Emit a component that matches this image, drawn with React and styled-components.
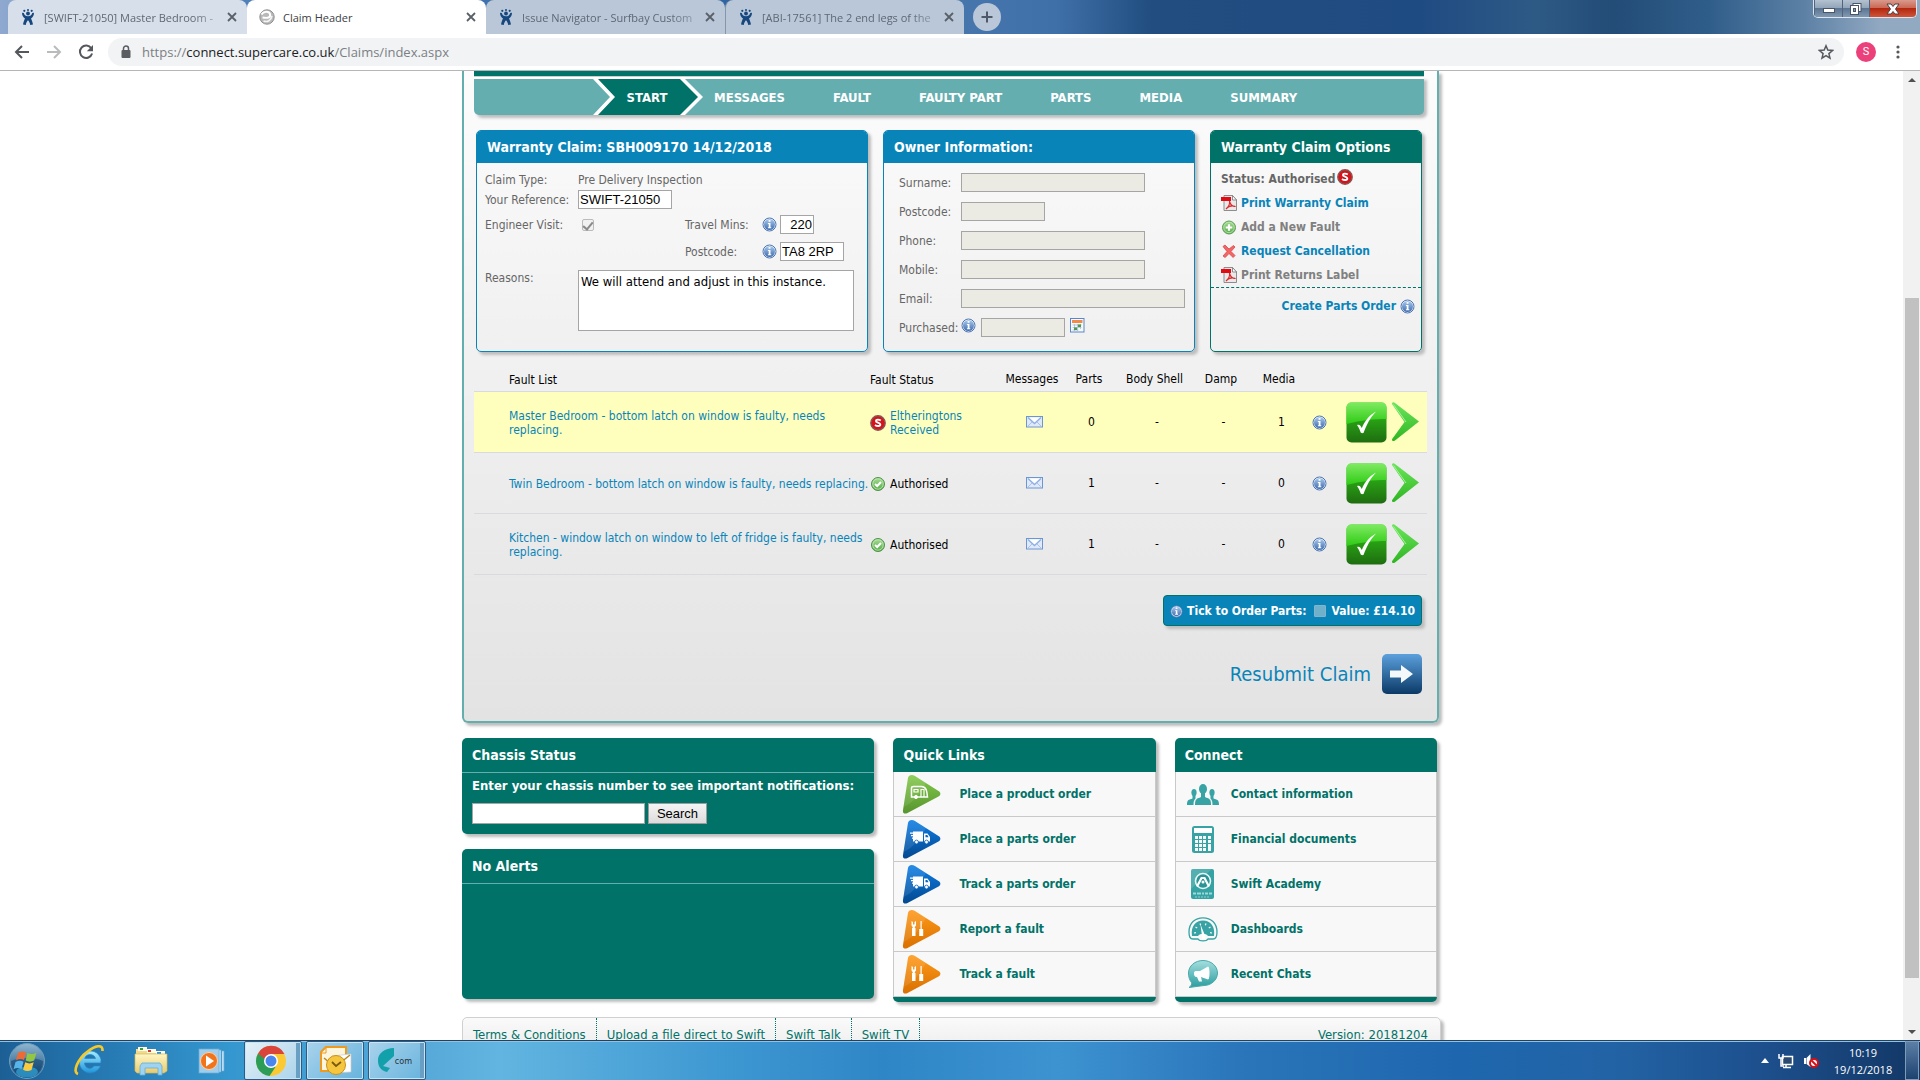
import styled, { createGlobalStyle, css } from "styled-components";

const tahoma = `"DejaVu Sans Condensed", "DejaVu Sans", sans-serif`;
const segoe = `"Open Sans", "Noto Sans", sans-serif`;
const arial = `"Liberation Sans", Arial, sans-serif`;

const tabs = [
    { title: "[SWIFT-21050] Master Bedroom -", tone: "light" },
    { title: "Claim Header", active: true },
    { title: "Issue Navigator - Surfbay Custom", tone: "dark" },
    { title: "[ABI-17561] The 2 end legs of the", tone: "dark", divided: true },
];

const steps = ["MESSAGES", "FAULT", "FAULTY PART", "PARTS", "MEDIA", "SUMMARY"];

const owner = [
    { id: "surname", label: "Surname:", width: 184 },
    { id: "ownerPostcode", label: "Postcode:", width: 84 },
    { id: "phone", label: "Phone:", width: 184 },
    { id: "mobile", label: "Mobile:", width: 184 },
    { id: "email", label: "Email:", width: 224 },
];

const options = [
    { label: "Print Warranty Claim", Icon: PdfIcon },
    { label: "Add a New Fault", Icon: AddIcon, muted: true },
    { label: "Request Cancellation", Icon: CrossIcon },
    { label: "Print Returns Label", Icon: PdfIcon, muted: true },
];

const faults = [
    { text: "Master Bedroom - bottom latch on window is faulty, needs replacing.", status: "Eltheringtons Received", received: true, parts: 0, media: 1 },
    { text: "Twin Bedroom - bottom latch on window is faulty, needs replacing.", status: "Authorised", parts: 1, media: 0 },
    { text: "Kitchen - window latch on window to left of fridge is faulty, needs replacing.", status: "Authorised", parts: 1, media: 0 },
];

const quickLinks = [
    { label: "Place a product order", kind: "caravan" },
    { label: "Place a parts order", kind: "truck" },
    { label: "Track a parts order", kind: "truck" },
    { label: "Report a fault", kind: "tools" },
    { label: "Track a fault", kind: "tools" },
];

const connectLinks = [
    { label: "Contact information", Icon: PeopleIcon },
    { label: "Financial documents", Icon: CalculatorIcon },
    { label: "Swift Academy", Icon: AcademyIcon },
    { label: "Dashboards", Icon: GaugeIcon },
    { label: "Recent Chats", Icon: ChatIcon },
];

const footerLinks = ["Terms & Conditions", "Upload a file direct to Swift", "Swift Talk", "Swift TV"];

function App() {
    return (
        <Screen>
            <GlobalStyle />
            <Gradients />
            <Browser />
            <Viewport>
                <Page>
                    <Site>
                        <ClaimPanel />
                        <BottomRow />
                        <Footer>
                            {footerLinks.map(text => <FooterLink href="#" key={text}>{text}</FooterLink>)}
                            <Version>Version: 20181204</Version>
                        </Footer>
                    </Site>
                </Page>
                <Scrollbar>
                    <svg width="17" height="17"><path d="M5 11h8l-4-4z" fill="#505050" /></svg>
                    <Thumb />
                    <svg width="17" height="17"><path d="M5 7h8l-4 4z" fill="#505050" /></svg>
                </Scrollbar>
            </Viewport>
            <Taskbar />
        </Screen>
    )
}

export default App;

function Browser() {
    return (
        <header>
            <TabStrip>
                {tabs.map(tab => (
                    <Tab key={tab.title} $active={tab.active} $tone={tab.tone} $divided={tab.divided}>
                        {tab.active ? <ClaimFavicon /> : <JiraFavicon />}
                        <TabTitle $active={tab.active}>{tab.title}</TabTitle>
                        <TabClose aria-label="Close tab">
                            <svg width="10" height="10" viewBox="0 0 10 10"><path d="M1 1l8 8M9 1l-8 8" stroke="#5a6068" strokeWidth="1.8" /></svg>
                        </TabClose>
                    </Tab>
                ))}
                <NewTab aria-label="New tab">
                    <svg width="14" height="14" viewBox="0 0 14 14"><path d="M7 1.500v11M1.500 7h11" stroke="#4e5a69" strokeWidth="2" /></svg>
                </NewTab>
                <WindowButtons>
                    <WindowButton aria-label="Minimise" $width={28}>
                        <svg width="14" height="12"><rect x="1.5" y="5.5" width="11" height="4" fill="#fff" stroke="#4b5568" /></svg>
                    </WindowButton>
                    <WindowButton aria-label="Restore" $width={27}>
                        <svg width="14" height="14">
                            <rect x="4" y="1.5" width="8" height="8" fill="#fff" stroke="#4b5568" />
                            <rect x="1.5" y="3.5" width="8" height="9" fill="#fff" stroke="#4b5568" />
                            <rect x="4.5" y="6.5" width="2" height="3" fill="#8a9bb0" stroke="#4b5568" />
                        </svg>
                    </WindowButton>
                    <WindowButton aria-label="Close" $width={47} $red>
                        <svg width="14" height="12" viewBox="0 0 14 12"><path d="M1 1h4l2 2.500L9 1h4L9.500 6l3.500 5H9L7 8.500 5 11H1l3.500-5z" fill="#fff" stroke="#4b4048" /></svg>
                    </WindowButton>
                </WindowButtons>
            </TabStrip>
            <Toolbar>
                <ToolButton aria-label="Back"><ArrowIcon color="#54585d" /></ToolButton>
                <ToolButton aria-label="Forward"><ArrowIcon color="#b9bbbd" flip /></ToolButton>
                <ToolButton aria-label="Reload">
                    <svg width="18" height="18" viewBox="0 0 18 18">
                        <path d="M14.300 5.200A6.200 6.200 0 1 0 15.100 10.500" fill="none" stroke="#54585d" strokeWidth="2" />
                        <path d="M16 2v6.200H9.800z" fill="#54585d" />
                    </svg>
                </ToolButton>
                <Omnibox>
                    <svg width="10" height="14" viewBox="0 0 10 14">
                        <rect x="0.500" y="5" width="9" height="8" rx="1" fill="#5a5e63" />
                        <path d="M2.500 5V3.500a2.500 2.500 0 0 1 5 0V5" fill="none" stroke="#5a5e63" strokeWidth="1.500" />
                    </svg>
                    <Url>https://<b>connect.supercare.co.uk</b>/Claims/index.aspx</Url>
                    <svg width="16" height="16" viewBox="0 0 16 16">
                        <path d="M8 1.800l1.800 4.300 4.700.4-3.600 3.100 1.100 4.600L8 11.700l-4 2.500 1.100-4.600L1.500 6.500l4.700-.4z" fill="none" stroke="#55595e" strokeWidth="1.500" />
                    </svg>
                </Omnibox>
                <Avatar>S</Avatar>
                <svg width="4" height="14"><g fill="#55595e"><circle cx="2" cy="2" r="1.600" /><circle cx="2" cy="7" r="1.600" /><circle cx="2" cy="12" r="1.600" /></g></svg>
            </Toolbar>
        </header>
    )
}

function ClaimPanel() {
    return (
        <Panel>
            <Strip />
            <StepNav>
                <StartStep href="#">START</StartStep>
                {steps.map(step => <Step href="#" key={step}>{step}</Step>)}
            </StepNav>
            <Cards>
                <Card>
                    <CardTitle>Warranty Claim: SBH009170 14/12/2018</CardTitle>
                    <ClaimForm>
                        <Label as="span">Claim Type:</Label>
                        <Wide><Label as="span">Pre Delivery Inspection</Label></Wide>
                        <Label htmlFor="reference">Your Reference:</Label>
                        <Wide><TextBox id="reference" defaultValue="SWIFT-21050" $width={94} /></Wide>
                        <Label htmlFor="engineer">Engineer Visit:</Label>
                        <Check id="engineer" type="checkbox" defaultChecked disabled />
                        <Label htmlFor="travel">Travel Mins:</Label>
                        <Field><InfoIcon /><TextBox id="travel" defaultValue="220" $width={34} $right /></Field>
                        <LateLabel htmlFor="postcode">Postcode:</LateLabel>
                        <Field><InfoIcon /><TextBox id="postcode" defaultValue="TA8 2RP" $width={64} /></Field>
                        <TopLabel htmlFor="reasons">Reasons:</TopLabel>
                        <Wide><Reasons id="reasons" defaultValue="We will attend and adjust in this instance." /></Wide>
                    </ClaimForm>
                </Card>
                <Card>
                    <CardTitle>Owner Information:</CardTitle>
                    <OwnerForm>
                        {owner.map(({ id, label, width }) => (
                            <OwnerRow key={id}>
                                <OwnerLabel htmlFor={id}>{label}</OwnerLabel>
                                <TextBox id={id} $width={width} disabled />
                            </OwnerRow>
                        ))}
                        <OwnerRow>
                            <OwnerLabel htmlFor="purchased">Purchased:</OwnerLabel>
                            <PurchasedField>
                                <InfoIcon />
                                <TextBox id="purchased" $width={84} disabled />
                                <CalendarIcon />
                            </PurchasedField>
                        </OwnerRow>
                    </OwnerForm>
                </Card>
                <Card $green>
                    <CardTitle $green>Warranty Claim Options</CardTitle>
                    <Options>
                        <Status>Status: Authorised <SwiftIcon /></Status>
                        {options.map(({ label, Icon, muted }) => (
                            <Option href="#" key={label} $muted={muted}><Icon />{label}</Option>
                        ))}
                    </Options>
                    <CreateOrder href="#">Create Parts Order <InfoIcon /></CreateOrder>
                </Card>
            </Cards>
            <FaultTable>
                <colgroup>
                    <col /><col width="131" /><col width="62" /><col width="52" /><col width="79" />
                    <col width="54" /><col width="62" /><col width="18" /><col width="99" />
                </colgroup>
                <thead>
                    <tr>
                        <HeadCell $first>Fault List</HeadCell>
                        <HeadCell $left>Fault Status</HeadCell>
                        <HeadCell>Messages</HeadCell>
                        <HeadCell>Parts</HeadCell>
                        <HeadCell>Body Shell</HeadCell>
                        <HeadCell>Damp</HeadCell>
                        <HeadCell>Media</HeadCell>
                        <HeadCell />
                        <HeadCell />
                    </tr>
                </thead>
                <tbody>
                    {faults.map(fault => (
                        <FaultRow key={fault.text} $selected={fault.received}>
                            <Cell $first><FaultLink href="#">{fault.text}</FaultLink></Cell>
                            <Cell $left>
                                <FaultStatus $blue={fault.received}>
                                    {fault.received ? <SwiftIcon /> : <TickIcon />}
                                    <span>{fault.status}</span>
                                </FaultStatus>
                            </Cell>
                            <Cell><MailIcon /></Cell>
                            <Cell>{fault.parts}</Cell>
                            <Cell>-</Cell>
                            <Cell>-</Cell>
                            <Cell>{fault.media}</Cell>
                            <Cell $bare><InfoIcon /></Cell>
                            <Cell $bare>
                                <Actions>
                                    <IconButton aria-label="Accept"><AcceptIcon /></IconButton>
                                    <IconButton aria-label="Open fault"><NextIcon /></IconButton>
                                </Actions>
                            </Cell>
                        </FaultRow>
                    ))}
                </tbody>
            </FaultTable>
            <OrderBar>
                <InfoIcon size={13} />
                <label htmlFor="order">Tick to Order Parts:</label>
                <OrderCheck id="order" type="checkbox" />
                <span>Value: £14.10</span>
            </OrderBar>
            <Resubmit>Resubmit Claim <SubmitIcon /></Resubmit>
        </Panel>
    )
}

function BottomRow() {
    return (
        <Bottom>
            <LeftColumn>
                <GreenBox>
                    <GreenTitle>Chassis Status</GreenTitle>
                    <Search onSubmit={ev => ev.preventDefault()}>
                        <label htmlFor="chassis">Enter your chassis number to see important notifications:</label>
                        <SearchRow>
                            <SearchInput id="chassis" />
                            <SearchButton type="submit">Search</SearchButton>
                        </SearchRow>
                    </Search>
                </GreenBox>
                <GreenBox $tall>
                    <GreenTitle>No Alerts</GreenTitle>
                </GreenBox>
            </LeftColumn>
            <LinkBox>
                <LinkTitle>Quick Links</LinkTitle>
                {quickLinks.map(({ label, kind }) => (
                    <BoxLink href="#" key={label}><IconSlot $width={56}><TriangleIcon kind={kind} /></IconSlot>{label}</BoxLink>
                ))}
            </LinkBox>
            <LinkBox>
                <LinkTitle>Connect</LinkTitle>
                {connectLinks.map(({ label, Icon }) => (
                    <BoxLink href="#" key={label}><IconSlot $width={46}><Icon /></IconSlot>{label}</BoxLink>
                ))}
            </LinkBox>
        </Bottom>
    )
}

function Taskbar() {
    return (
        <Bar>
            <StartOrb aria-label="Start"><OrbIcon /></StartOrb>
            <Launcher aria-label="Internet Explorer"><IeIcon /></Launcher>
            <Launcher aria-label="Explorer"><FolderIcon /></Launcher>
            <Launcher aria-label="Media Player"><PlayerIcon /></Launcher>
            <TaskButton aria-label="Chrome" $bright $stacked><ChromeIcon /></TaskButton>
            <TaskButton aria-label="Outlook"><OutlookIcon /></TaskButton>
            <TaskButton $stacked>
                <svg width="18" height="28" viewBox="0 0 18 28"><path d="M17 1v8L6 19l7 2-3 4C3 23 1 19 1 13 1 6 8 1 17 1z" fill="#12a0aa" /></svg>
                <span>com</span>
            </TaskButton>
            <Tray>
                <svg width="8" height="5"><path d="M0 5h8L4 0z" fill="#fff" /></svg>
                <svg width="16" height="16" viewBox="0 0 16 16">
                    <path d="M4.500 3.500h10v8h-10zM8 12v2M5 14.500h8" fill="#2b4a70" stroke="#fff" strokeWidth="1.500" />
                    <path d="M1 1v4h4V1M3 5v8h3" fill="none" stroke="#fff" strokeWidth="1.500" />
                </svg>
                <svg width="16" height="16" viewBox="0 0 16 16">
                    <path d="M1 5h2v6H1zM3.500 5L7.500 1v13l-4-3z" fill="#fff" />
                    <circle cx="11" cy="10" r="4" fill="#fff" stroke="#d80f16" strokeWidth="2" />
                    <path d="M8.500 7.500l5 5" stroke="#d80f16" strokeWidth="2" />
                </svg>
            </Tray>
            <Clock><time>10:19</time><time>19/12/2018</time></Clock>
            <ShowDesktop aria-label="Show desktop" />
        </Bar>
    )
}

/* icons */

function Gradients() {
    return (
        <svg width="0" height="0" aria-hidden="true">
            <defs>
                <Fade id="gInfo" from="#a9c9ec" to="#3f6cb0" />
                <Fade id="gGreenDot" from="#a6dc93" to="#55ab48" />
                <Fade id="gAcceptTop" from="#7fea62" to="#2ecb14" />
                <Fade id="gAcceptLow" from="#30c818" to="#1f6d10" />
                <Fade id="gNext" from="#6be55c" to="#2fb521" />
                <Fade id="gSubmit" from="#5ba0dd" to="#0b3a67" />
                <Fade id="gTeal" from="#a5dede" to="#2b9d9f" />
                <Fade id="gcaravan" from="#83c94a" to="#58952f" />
                <Fade id="gtruck" from="#0e7fe6" to="#04488f" />
                <Fade id="gtools" from="#ff9a1a" to="#d97000" />
                <Fade id="gOrb" from="#8fb6cf" to="#0f4a7c" />
                <Fade id="gIe" from="#a5ecff" to="#1f95da" />
                <Fade id="gFolder" from="#fff6c4" to="#e9cb6d" />
            </defs>
        </svg>
    )
}

function Fade({ id, from, to }) {
    return (
        <linearGradient id={id} x1="0" y1="0" x2="0" y2="1">
            <stop offset="0" stopColor={from} />
            <stop offset="1" stopColor={to} />
        </linearGradient>
    )
}

function ArrowIcon({ color, flip }) {
    return (
        <svg width="16" height="16" viewBox="0 0 16 16">
            <path d={flip ? "M1 8h13M8 2l6 6-6 6" : "M15 8H2M8 2L2 8l6 6"} fill="none" stroke={color} strokeWidth="2" />
        </svg>
    )
}

function JiraFavicon() {
    return (
        <svg width="16" height="16" viewBox="0 0 16 16">
            <g fill="#17477f">
                <circle cx="4.300" cy="1.800" r="1.100" /><circle cx="8" cy="1.100" r="1" /><circle cx="11.700" cy="1.800" r="1.100" />
                <circle cx="8" cy="4.500" r="1.900" />
                <path d="M2 3.800l1.800.2C4.300 6.400 6 7.300 8 7.300s3.700-.9 4.200-3.300l1.800-.2c0 3-1.300 4.600-3 5.700.8 1.800 1.500 3.500 2 6l-2.800.4C9.900 14 9.300 12.800 8 11.300c-1.300 1.500-1.900 2.700-2.200 4.600L3 15.500c.5-2.500 1.200-4.200 2-6C3.300 8.400 2 6.800 2 3.800z" />
            </g>
        </svg>
    )
}

function ClaimFavicon() {
    return (
        <svg width="16" height="16" viewBox="0 0 16 16">
            <circle cx="8" cy="8" r="7.200" fill="#b9b9b9" stroke="#8f8f8f" />
            <path d="M2.500 5.500C4 2.500 10 1.500 11 5s-2 4.500-7.500 3.500" fill="none" stroke="#fff" strokeWidth="2" />
            <path d="M4.500 12c4 1.500 7.500-.5 8.500-5" fill="none" stroke="#f4f4f4" strokeWidth="1.600" />
        </svg>
    )
}

function InfoIcon({ size = 15 }) {
    return (
        <svg width={size} height={size} viewBox="0 0 15 15">
            <circle cx="7.500" cy="7.500" r="6.500" fill="#f2f6fb" stroke="#4c76b0" />
            <circle cx="7.500" cy="7.500" r="5.500" fill="url(#gInfo)" />
            <path d="M6.600 3h1.900v1.700H6.600zM5.900 6h2.600v4.200h.8v1.100H5.900v-1.100h.8V7h-.8z" fill="#fff" />
        </svg>
    )
}

function SwiftIcon() {
    return (
        <svg width="16" height="16" viewBox="0 0 16 16">
            <circle cx="8" cy="8" r="7.200" fill="#d3151b" stroke="#8b5252" strokeWidth="1.400" />
            <path d="M10.800 5.600C9 4.300 6 4.300 5.900 6c0 2 4.400 1.300 4.400 3.500 0 2-3.300 2-5.300.5" fill="none" stroke="#fff" strokeWidth="1.900" />
        </svg>
    )
}

function PdfIcon() {
    return (
        <svg width="16" height="16" viewBox="0 0 16 16">
            <path d="M3 .5h8.500L15.500 5v10.500H3z" fill="#e9e9e9" stroke="#8d8d8d" />
            <path d="M11.500.5V5h4z" fill="#fff" stroke="#777" strokeWidth="0.800" />
            <path d="M0 2h10v4H0z" fill="#e30b13" />
            <path d="M8.500 6c1 4 2.500 6 6 5.500-3-1-7-.5-9.500 2.500C7.500 12 9 9 8.500 6z" fill="none" stroke="#e0262b" strokeWidth="1.100" />
        </svg>
    )
}

function AddIcon() {
    return (
        <svg width="16" height="16" viewBox="0 0 16 16">
            <circle cx="8" cy="8.500" r="6.500" fill="url(#gGreenDot)" stroke="#5d9d55" />
            <circle cx="8" cy="8.500" r="5.200" fill="none" stroke="#c4e6ba" strokeWidth="0.800" />
            <path d="M8 5.200v6.600M4.700 8.500h6.600" stroke="#fff" strokeWidth="2.200" />
        </svg>
    )
}

function CrossIcon() {
    return (
        <svg width="16" height="16" viewBox="0 0 16 16">
            <path d="M2 3.500L4 2l4 4 4.500-3.500L14 4l-4 4.500 4 4-1.800 2L8 10.500 4.200 14.500 2 13l4-4.500z" fill="#f26666" stroke="#d94a4c" strokeWidth="0.800" />
        </svg>
    )
}

function CalendarIcon() {
    return (
        <svg width="15" height="15" viewBox="0 0 15 15">
            <rect x="0.500" y="0.500" width="13.500" height="13.500" fill="#f6f9fd" stroke="#5b87c4" />
            <rect x="2" y="2" width="10.500" height="3" fill="#f58a45" />
            <path d="M2.500 7h9M2.500 9.500h9M2.500 12h6M4.500 6v7M7.500 6v7M10.500 6v5" stroke="#a9bdd9" strokeWidth="0.800" />
            <path d="M8 6.500h3v2.500H8zM4 9.500h3V12H4z" fill="#4f9a3f" />
        </svg>
    )
}

function TickIcon() {
    return (
        <svg width="16" height="16" viewBox="0 0 16 16">
            <circle cx="8" cy="8" r="6.500" fill="url(#gGreenDot)" stroke="#4c9346" />
            <circle cx="8" cy="8" r="5.200" fill="none" stroke="#c4e6ba" strokeWidth="0.800" />
            <path d="M5 8l2.200 2L11 6" fill="none" stroke="#fff" strokeWidth="2" />
        </svg>
    )
}

function MailIcon() {
    return (
        <svg width="17" height="12" viewBox="0 0 17 12">
            <rect x="0.500" y="0.500" width="16" height="10.500" fill="#dfe9fa" stroke="#6c96d2" />
            <path d="M1.500 10.500l5-5M15.500 10.500l-5-5" stroke="#a9c2ea" fill="none" />
            <path d="M2 1.500l6.500 6 6.500-6" fill="#fff" stroke="#8fb0e2" strokeWidth="1.400" />
        </svg>
    )
}

function AcceptIcon() {
    return (
        <svg width="41" height="41" viewBox="0 0 41 41">
            <rect x="0.500" y="0.500" width="40" height="40" rx="5" fill="url(#gAcceptLow)" />
            <path d="M.5 22V5.500a5 5 0 0 1 5-5h30a5 5 0 0 1 5 5V17c-12 0-25 1-40 5z" fill="url(#gAcceptTop)" />
            <path d="M11 23c2-1 3.500 0 4.800 3C19 18.500 23.500 13 30 9.500 24 16 21 22 17.500 31c-2 .5-2.800-.2-3.200-1.500-1-3-1.800-4.500-3.300-6.500z" fill="#fff" />
        </svg>
    )
}

function NextIcon() {
    return (
        <svg width="28" height="40" viewBox="0 0 28 40">
            <path d="M0 2C0 0 2 0 3 1l24 18.500L3 38.500c-2 1.500-4 0-2.500-2L12.500 20z" fill="url(#gNext)" />
            <path d="M1.500 2.500L14 20" stroke="#a4f39a" strokeWidth="1" fill="none" />
        </svg>
    )
}

function SubmitIcon() {
    return (
        <svg width="40" height="40" viewBox="0 0 40 40">
            <rect width="40" height="40" rx="5" fill="url(#gSubmit)" />
            <path d="M8 16.500h11v-5.500l12 9-12 9v-5.500H8z" fill="#f4f8fb" />
        </svg>
    )
}

function TriangleIcon({ kind }) {
    return (
        <svg width="39" height="40" viewBox="0 0 39 40">
            <path d="M6 4c.5-3 4-4 6.500-2.200L36.500 17c2.500 1.500 2.500 4 0 5.500L5.500 39C2.500 40.500.5 39 1 36z" fill={`url(#g${kind})`} />
            <path d="M6 4c.5-3 4-4 6.500-2.200L24 9C18 20 12 28 1.500 33z" fill="#fff" opacity="0.100" />
            {kind === "caravan" && (
                <g fill="none" stroke="#fff" strokeWidth="1.500">
                    <path d="M12 23H9.500V14c0-1 1-1.500 2-1.500h8c5 0 5.500 5 6 10.500H16" />
                    <path d="M12 15.500h4v2.500h-4z" strokeWidth="1.200" />
                    <path d="M19 23v-7.500h3V23" strokeWidth="1.200" />
                    <circle cx="14" cy="23" r="1.600" fill="#fff" strokeWidth="1" />
                </g>
            )}
            {kind === "truck" && (
                <g fill="#fff">
                    <path d="M11 12.500h10v10H11zM22 14.500h3.500l2.500 3.500v4.500h-6zM8 13.500h3v1.200H8zM9 16h3v1.200H9zM10 18.500h2v1.200h-2z" />
                    <path d="M23.500 16h1.800l1.300 2.200h-3.100z" fill="#0a66bf" />
                    <g stroke="#0862b8" strokeWidth="0.800"><circle cx="14.500" cy="23" r="1.900" /><circle cx="24.500" cy="23" r="1.900" /></g>
                </g>
            )}
            {kind === "tools" && (
                <g fill="#fff">
                    <path d="M9.500 12l1.500 1v2.500h1.500V13l1.500-1v4.500L12.800 18v1h.7v8h-3.500v-8h.7v-1L9.500 16.500z" />
                    <path d="M18.500 12h1.200v8h1.500v7h-4v-7h1.300z" />
                </g>
            )}
        </svg>
    )
}

function PeopleIcon() {
    return (
        <svg width="32" height="21" viewBox="0 0 32 21">
            <g fill="#37a3a4">
                <ellipse cx="16" cy="5" rx="4" ry="5" />
                <path d="M8 21c0-7 2-6 6-8V9h4v4c4 2 6 1 6 8z" />
                <ellipse cx="7" cy="8.500" rx="2.600" ry="3.600" /><ellipse cx="25" cy="8.500" rx="2.600" ry="3.600" />
                <path d="M0 21c0-6 2-5 5.500-6.500V11h3v3.500c-1.500 1.500-2 3-2 6.500zM32 21c0-6-2-5-5.500-6.500V11h-3v3.500c1.500 1.500 2 3 2 6.500z" />
            </g>
        </svg>
    )
}

function CalculatorIcon() {
    return (
        <svg width="22" height="27" viewBox="0 0 22 27">
            <rect width="22" height="27" rx="2.500" fill="#37a3a4" />
            <rect x="2" y="2" width="18" height="5" fill="#fff" />
            <g fill="#f8f8f8">
                {[10, 14, 18, 22].map(y => [3, 7, 11].map(x => <rect key={`${x}-${y}`} x={x} y={y} width="3" height="3" />))}
                <rect x="16" y="10" width="3" height="3" /><rect x="16" y="14" width="3" height="3" /><rect x="16" y="18" width="3" height="7" />
            </g>
        </svg>
    )
}

function AcademyIcon() {
    return (
        <svg width="23" height="30" viewBox="0 0 23 30">
            <rect width="23" height="30" rx="2" fill="#35a2a3" />
            <path d="M0 2a2 2 0 0 1 2-2h19L0 20z" fill="#fff" opacity="0.150" />
            <circle cx="12" cy="12" r="7.500" fill="#2c9496" stroke="#e7f6f5" strokeWidth="1.600" />
            <path d="M6 17.500l4.500-8.500h3l4.500 8.500" fill="none" stroke="#fff" strokeWidth="2.200" />
            <circle cx="12" cy="13" r="1.500" fill="#fff" />
            <path d="M2 24.500h3M6 24.500h4M11 24.500h2M14 24.500h3M18 24.500h3" stroke="#9fd8d7" strokeWidth="2" />
            <path d="M4 28h15" stroke="#8fd0cf" strokeWidth="1" strokeDasharray="2 1" />
        </svg>
    )
}

function GaugeIcon() {
    return (
        <svg width="30" height="25" viewBox="0 0 30 25">
            <path d="M1 15C1 6 7 .8 15 .8S29 6 29 15c0 5-1 7-4 7h-5c-1.500 2.500-8.500 2.500-10 0H5c-3 0-4-2-4-7z" fill="#f8f8f8" stroke="#37a3a4" strokeWidth="1.300" />
            <path d="M4 19C2.500 9 8 3.500 15 3.500S27.500 9 26 19h-6c-2-3-8-3-10 0z" fill="#37a3a4" />
            <path d="M6 16l2-.3M7.500 10l1.700 1M12 6.500l.7 1.700M18 6.500l-.7 1.700M22.500 10l-1.700 1M24 16l-2-.3" stroke="#fff" strokeWidth="1.200" />
            <path d="M12.500 7.500L17 18.500a2 2 0 1 1-3 .5z" fill="#fff" />
        </svg>
    )
}

function ChatIcon() {
    return (
        <svg width="30" height="28" viewBox="0 0 30 28">
            <path d="M15 .5C23 .5 29.500 6 29.500 13S23 25.500 16 25.500L1 27.500c2.500-2 3-3 2.500-5C1.500 20 .5 17 .5 13 .5 6 7 .5 15 .5z" fill="url(#gTeal)" stroke="#4aa9ab" />
            <path d="M6 13c0-1.500 1-2 3-2h3l8-4.500c2 0 2 13 0 13L13 17l1 4.500h-3L9 17c-2.500 0-3-1.500-3-4z" fill="#fff" />
        </svg>
    )
}

function OrbIcon() {
    return (
        <svg width="38" height="38" viewBox="0 0 38 38">
            <circle cx="19" cy="19" r="17.500" fill="url(#gOrb)" stroke="#6d9fc0" />
            <path d="M3 19c4-2 9-3 16-3s12 1 16 3a16 16 0 0 1-32 0z" fill="#0d3f6e" opacity="0.550" />
            <ellipse cx="19" cy="30" rx="11" ry="5.500" fill="#39b7ea" opacity="0.600" />
            <path d="M10 11c3-2 5.500-2 8-.5l-2 7.500c-2.500-1.500-5-1.500-8 .3z" fill="#ee6a35" />
            <path d="M19.500 11c3 1.500 6 1.500 9-.5l-2.300 8c-3 1.500-5.700 1.500-8.500 0z" fill="#93c642" />
            <path d="M7.500 20c3-1.700 5.500-1.700 8-.3l-2 7.300c-2.700-1.500-5.200-1.500-8 .3z" fill="#57b5ec" />
            <path d="M17.200 20.300c2.800 1.500 5.600 1.500 8.500 0l-2.200 7.700c-3 1.500-5.700 1.300-8.400-.3z" fill="#fbcb3f" />
        </svg>
    )
}

function IeIcon() {
    return (
        <svg width="32" height="32" viewBox="0 0 32 32">
            <path d="M27.500 21A11 11 0 1 1 28 14.500L27.800 18H11.500c.5 6 7 7 9.500 3zM11.700 13.500h10.800c-.8-5-9.800-5.500-10.800 0z" fill="url(#gIe)" stroke="#2a86c8" strokeWidth="0.700" />
            <path d="M5 29C-1 27 5 14 14 7S30-1 29.500 6" fill="none" stroke="#f6c928" strokeWidth="2.600" />
        </svg>
    )
}

function FolderIcon() {
    return (
        <svg width="34" height="30" viewBox="0 0 34 30">
            <path d="M2 3h9l2 2h16v6H2z" fill="#f1db8b" />
            <path d="M4 1h9v4H4zM13 3h9v4h-9zM22 5h9v4h-9z" fill="#fffbe8" />
            <path d="M6 2h3v2H6z" fill="#3c9c3c" /><path d="M14 4h3v2h-3z" fill="#d43a2e" /><path d="M23 6h4v2h-4z" fill="#2f8fd8" />
            <path d="M1 8h32v17l-3 2H3l-2-2z" fill="url(#gFolder)" stroke="#d6b85c" strokeWidth="0.700" />
            <path d="M6 29v-9l2-3h18l2 3v9h-4v-7H11v7z" fill="#9fd3ef" stroke="#63aedb" strokeWidth="0.800" />
        </svg>
    )
}

function PlayerIcon() {
    return (
        <svg width="30" height="26" viewBox="0 0 30 26">
            <path d="M20 2h3v22h-3M24 3h2v20h-2" fill="#b9def2" stroke="#6badd6" strokeWidth="0.600" />
            <rect x="1" y="1" width="20" height="24" fill="#9fcdea" stroke="#6badd6" strokeWidth="0.700" />
            <circle cx="11" cy="13" r="8.500" fill="#f1731c" stroke="#fbd1a8" />
            <path d="M8 7.500l8 5.500-8 5.500z" fill="#fff" />
        </svg>
    )
}

function ChromeIcon() {
    return (
        <svg width="32" height="32" viewBox="0 0 32 32">
            <circle cx="16" cy="16" r="15" fill="#fbc934" />
            <path d="M16 16L3 8.500A15 15 0 0 0 14.500 31l6-9z" fill="#2b9d56" />
            <path d="M3 8.500a15 15 0 0 1 26.500.5H16v10z" fill="#d9453a" />
            <circle cx="16" cy="16" r="7" fill="#fff" /><circle cx="16" cy="16" r="5.500" fill="#4b86ee" />
        </svg>
    )
}

function OutlookIcon() {
    return (
        <svg width="34" height="32" viewBox="0 0 34 32">
            <path d="M8 2h20v24H3V7z" fill="#fdf6df" stroke="#ee9a1f" strokeWidth="2" />
            <path d="M8 3v5H3" fill="none" stroke="#ee9a1f" />
            <path d="M14 11l19-2v18l-19 1z" fill="#fff" stroke="#c9c9c9" strokeWidth="0.700" />
            <path d="M6 13l11 9 15-12" fill="none" stroke="#b98a1d" strokeWidth="1.500" />
            <circle cx="18" cy="20" r="9.500" fill="#f6c73e" stroke="#c8921a" />
            <path d="M14 17l4 4 5-4" fill="none" stroke="#7a5a10" strokeWidth="1.800" />
        </svg>
    )
}

/* styles */

const GlobalStyle = createGlobalStyle`
    * {
        box-sizing: border-box;
    }
    body {
        margin: 0;
        background: #fff;
        font-family: ${tahoma};
        font-size: 12px;
    }
    svg {
        display: block;
        flex: none;
    }
    a {
        text-decoration: none;
    }
    button {
        padding: 0;
        border: none;
        background: none;
        font: inherit;
    }
`;

const Screen = styled.div`
    display: flex;
    flex-direction: column;
    height: 100vh;
    overflow: hidden;
`;

const TabStrip = styled.div`
    display: flex;
    height: 34px;
    padding-left: 8px;
    background: linear-gradient(90deg, #8ea8cf 0, #4f7fb9 13%, #2e629f 40%, #4676ac 50%, #3f70a8 55%, #214d80 60%, #1f4b83 74%, #2d5a85 80%, #234c77 84%, #2f5d8a 89%, #5d81a5 94%, #92a9c2 98%);
`;

const Tab = styled.div`
    display: flex;
    align-items: center;
    width: 239px;
    padding: 0 10px 0 12px;
    border-radius: 8px 8px 0 0;
    background: ${({ $active, $tone }) => $active ? "#fff" : $tone === "light" ? "#d7dfea" : "#b9c7d9"};
    ${({ $divided }) => $divided && css`
        border-left: 1px solid #8797ab;
    `}
`;

const TabTitle = styled.span`
    flex: 1;
    margin: 0 2px 0 8px;
    white-space: nowrap;
    font-family: ${segoe};
    font-size: 11px;
    color: ${({ $active }) => $active ? "#3c4043" : "#5f6873"};
    mask-image: ${({ $active }) => $active ? "none" : "linear-gradient(90deg, #000 82%, rgba(0, 0, 0, 0.2))"};
`;

const TabClose = styled.button`
    display: flex;
`;

const NewTab = styled.button`
    display: flex;
    align-items: center;
    justify-content: center;
    width: 28px;
    height: 28px;
    margin: 3px 0 0 9px;
    border-radius: 50%;
    background: #b9c7d9;
`;

const WindowButtons = styled.div`
    display: flex;
    height: 18px;
    margin: 0 3px 0 auto;
    border: 1px solid #dbe6f0;
    border-top: none;
    border-radius: 0 0 5px 5px;
    overflow: hidden;
`;

const WindowButton = styled.button`
    display: flex;
    align-items: center;
    justify-content: center;
    width: ${({ $width }) => $width}px;
    border-left: 1px solid #52647d;
    background: ${({ $red }) => $red
        ? "linear-gradient(#d99a8c 0, #cb6a57 45%, #b3280f 50%, #d0543a 100%)"
        : "linear-gradient(#b4c2d1 0, #93a6ba 45%, #5b7592 50%, #8299b1 100%)"};
`;

const Toolbar = styled.div`
    display: flex;
    align-items: center;
    height: 37px;
    padding: 0 20px 0 6px;
    border-bottom: 1px solid #b6b5b7;
    background: #fff;
`;

const ToolButton = styled.button`
    display: flex;
    justify-content: center;
    width: 32px;
`;

const Omnibox = styled.div`
    display: flex;
    flex: 1;
    align-items: center;
    height: 28px;
    margin: 0 12px 0 6px;
    padding: 0 10px 0 13px;
    border-radius: 14px;
    background: #f1f3f4;
`;

const Url = styled.span`
    flex: 1;
    margin-left: 11px;
    font-family: ${segoe};
    font-size: 13px;
    color: #7b7f84;

    b {
        font-weight: 400;
        color: #202124;
    }
`;

const Avatar = styled.span`
    width: 20px;
    height: 20px;
    margin-right: 20px;
    border-radius: 50%;
    background: #ec407a;
    font-family: Roboto, sans-serif;
    font-size: 11px;
    line-height: 20px;
    text-align: center;
    color: #fff;
`;

const Viewport = styled.main`
    display: flex;
    flex: 1;
    min-height: 0;
`;

const Page = styled.div`
    flex: 1;
    overflow: hidden;
`;

const Site = styled.div`
    max-width: 979px;
    margin: 0 auto;
    padding-right: 2px;
`;

const Scrollbar = styled.div`
    display: flex;
    flex-direction: column;
    width: 17px;
    background: #f1f1f1;
`;

const Thumb = styled.div`
    flex: 1;
    margin: 210px 1px 45px 2px;
    background: #c1c1c1;
`;

const shadow = css`
    box-shadow: 3px 3px 3px #bdbdbd;
`;

const Panel = styled.section`
    padding: 0 10px 27px;
    border: 2px solid #65aeae;
    border-top: none;
    border-radius: 0 0 6px 6px;
    background: linear-gradient(#fcfcfc, #e3e3e3);
    ${shadow}
`;

const Strip = styled.div`
    height: 6px;
    margin-right: 3px;
    border-bottom: 1px solid #c9cfcf;
    background: #017268;
`;

const StepNav = styled.nav`
    display: flex;
    gap: 48px;
    height: 38px;
    margin-right: 3px;
    padding-left: 119px;
    border-top: 2px solid #fff;
    border-radius: 0 0 5px 5px;
    background: #65aeb0;
    ${shadow}
`;

const Step = styled.a`
    padding-top: 1px;
    font-size: 13px;
    font-weight: 700;
    line-height: 35px;
    color: #fff;
`;

const StartStep = styled(Step)`
    position: relative;
    width: 110px;
    margin-right: -37px;
    padding-right: 2px;
    background: #fff;
    text-align: center;
    clip-path: polygon(0 0, 92px 0, 110px 50%, 92px 100%, 0 100%, 17px 50%);
    isolation: isolate;

    &::before {
        content: "";
        position: absolute;
        inset: 0;
        z-index: -1;
        background: #017268;
        clip-path: polygon(5px 0, 87px 0, 105px 50%, 87px 100%, 5px 100%, 22px 50%);
    }
`;

const Cards = styled.div`
    display: grid;
    grid-template-columns: 392fr 312fr 212fr;
    gap: 15px;
    margin: 15px 5px 0 2px;
`;

const Card = styled.section`
    height: 222px;
    border: 1px solid ${({ $green }) => $green ? "#017268" : "#0984b9"};
    border-radius: 5px;
    overflow: hidden;
    background: linear-gradient(#fafafa, #f0f0f0);
    ${shadow}
`;

const CardTitle = styled.h2`
    margin: 0;
    padding-left: 10px;
    background: ${({ $green }) => $green ? "#017268" : "#0984b9"};
    font-size: 14px;
    line-height: 32px;
    color: #fff;
`;

const ClaimForm = styled.div`
    display: grid;
    grid-template-columns: 93px 107px 77px 1fr;
    grid-template-rows: 17px 23px 27px 27px 1fr;
    align-items: center;
    padding: 8px 8px 0;
`;

const Label = styled.label`
    font-size: 12px;
    line-height: 16px;
    color: #666;
`;

const LateLabel = styled(Label)`
    grid-column: 3;
`;

const TopLabel = styled(Label)`
    align-self: start;
    padding-top: 5px;
`;

const Wide = styled.div`
    grid-column: 2 / -1;
    display: flex;
`;

const Field = styled.div`
    display: flex;
    align-items: center;
    gap: 3px;
`;

const TextBox = styled.input`
    width: ${({ $width }) => $width}px;
    height: 19px;
    padding: 0 1px;
    border: 1px solid #a5a5a5;
    background: #fff;
    font-family: ${arial};
    font-size: 13px;
    color: #000;
    text-align: ${({ $right }) => $right ? "right" : "left"};

    &:disabled {
        background: #ebebe4;
    }
`;

const Reasons = styled.textarea`
    width: 276px;
    height: 61px;
    margin-top: 5px;
    padding: 3px 2px;
    border: 1px solid #a5a5a5;
    resize: none;
    font-family: ${tahoma};
    font-size: 13px;
    line-height: 16px;
    color: #000;
`;

const Check = styled.input`
    display: flex;
    justify-content: center;
    width: 12px;
    height: 12px;
    margin: 0 0 0 4px;
    border: 1px solid #bbb;
    border-radius: 2px;
    background: #f1f1f1;
    appearance: none;

    &:checked::after {
        content: "";
        width: 4px;
        height: 8px;
        border: solid #8a8a8a;
        border-width: 0 2px 2px 0;
        transform: rotate(40deg);
    }
`;

const OwnerForm = styled.div`
    display: flex;
    flex-direction: column;
    gap: 10px;
    padding: 10px 0 0 15px;
`;

const OwnerRow = styled.div`
    display: flex;
    align-items: center;
    height: 19px;
`;

const OwnerLabel = styled(Label)`
    width: 62px;
    white-space: nowrap;
`;

const PurchasedField = styled.div`
    display: flex;
    gap: 5px;
`;

const Options = styled.div`
    display: flex;
    flex-direction: column;
    padding: 4px 10px 0;
    border-bottom: 1px dashed #017268;
`;

const Status = styled.div`
    display: flex;
    gap: 2px;
    font-size: 12px;
    font-weight: 700;
    line-height: 24px;
    color: #666;

    svg {
        margin-top: 2px;
    }
`;

const Option = styled.a`
    display: flex;
    align-items: center;
    gap: 4px;
    font-size: 12px;
    font-weight: 700;
    line-height: 24px;
    color: ${({ $muted }) => $muted ? "#808080" : "#0984b9"};
`;

const CreateOrder = styled(Option)`
    justify-content: flex-end;
    padding: 6px 6px 0 0;
`;

const FaultTable = styled.table`
    width: 100%;
    margin-top: 15px;
    border-spacing: 0;
    table-layout: fixed;
`;

const cell = css`
    padding: ${({ $first, $left }) => $first || $left ? "2px 0 0" : "0"};
    border-bottom: 1px solid #d9dadd;
    font-size: 12px;
    text-align: ${({ $first, $left }) => $first || $left ? "left" : "center"};

    ${({ $first }) => $first && css`
        padding-left: 35px;
    `}
`;

const HeadCell = styled.th`
    height: 25px;
    font-weight: 400;
    ${cell}
`;

const Cell = styled.td`
    height: 61px;
    line-height: 14px;
    ${cell}
    ${({ $first, $left, $bare }) => !$first && !$left && !$bare && css`
        padding-left: 5px;
    `}

    > svg {
        margin: 0 auto;
    }
`;

const FaultRow = styled.tr`
    background: ${({ $selected }) => $selected ? "#ffffbd" : "transparent"};
`;

const FaultLink = styled.a`
    color: #0984b9;
`;

const FaultStatus = styled.div`
    display: flex;
    align-items: center;
    gap: 4px;
    color: ${({ $blue }) => $blue ? "#0984b9" : "#000"};

    span {
        width: 84px;
    }
`;

const Actions = styled.div`
    display: flex;
    gap: 5px;
    padding-left: 18px;
`;

const IconButton = styled.button`
    display: flex;
`;

const OrderBar = styled.div`
    display: flex;
    align-items: center;
    width: fit-content;
    height: 31px;
    margin: 20px 5px 0 auto;
    padding: 1px 6px 0;
    border: 1px solid #017268;
    border-radius: 4px;
    background: #0984b9;
    font-size: 12px;
    font-weight: 700;
    color: #fff;
    ${shadow}

    label {
        margin-left: 4px;
    }
`;

const OrderCheck = styled.input`
    width: 12px;
    height: 12px;
    margin: 0 6px 0 7px;
    border: 1px solid #82b5cc;
    border-radius: 1px;
    background: #6fb0cb;
    appearance: none;
`;

const Resubmit = styled.button`
    display: flex;
    align-items: center;
    gap: 11px;
    margin: 28px 5px 0 auto;
    font-size: 20px;
    color: #0984b9;
`;

const Bottom = styled.div`
    display: grid;
    grid-template-columns: 412fr 262fr 262fr;
    gap: 19px;
    align-items: start;
    margin: 15px 2px 0 0;
`;

const LeftColumn = styled.div`
    display: flex;
    flex-direction: column;
    gap: 15px;
`;

const GreenBox = styled.section`
    height: ${({ $tall }) => $tall ? 150 : 96}px;
    border-radius: 5px;
    background: #017268;
    color: #fff;
    ${shadow}
`;

const GreenTitle = styled.h2`
    margin: 0;
    padding-left: 10px;
    border-bottom: 1px solid #65aeb0;
    font-size: 14px;
    line-height: 34px;
`;

const Search = styled.form`
    padding: 5px 10px;
    font-size: 13px;
    font-weight: 700;
    line-height: 16px;
    white-space: nowrap;
`;

const SearchRow = styled.div`
    display: flex;
    gap: 3px;
    margin-top: 9px;
`;

const SearchInput = styled.input`
    width: 173px;
    height: 21px;
    border: 1px solid #a5a5a5;
    font-family: ${arial};
    font-size: 13px;
`;

const SearchButton = styled.button`
    width: 59px;
    border: 1px solid #9b9b9b;
    background: linear-gradient(#f4f4f4, #dcdcdc);
    font-family: ${arial};
    font-size: 13px;
    font-weight: 400;
    color: #000;
`;

const LinkBox = styled.section`
    border-bottom: 5px solid #017268;
    border-radius: 5px;
    background: #f8f8f8;
    ${shadow}
`;

const LinkTitle = styled.h2`
    margin: 0;
    padding-left: 10px;
    border-radius: 5px 5px 0 0;
    background: #017268;
    font-size: 14px;
    line-height: 34px;
    color: #fff;
`;

const BoxLink = styled.a`
    display: flex;
    align-items: center;
    height: 45px;
    padding-left: 9px;
    border: 1px solid #c9c9c9;
    border-top: none;
    font-size: 12px;
    font-weight: 700;
    color: #017268;
`;

const IconSlot = styled.span`
    display: flex;
    justify-content: center;
    width: ${({ $width }) => $width}px;
    padding-right: ${({ $width }) => $width - 36}px;
`;

const Footer = styled.footer`
    display: flex;
    margin: 15px -2px 0 0;
    height: 60px;
    border: 1px solid #d0d0d0;
    border-radius: 5px 5px 0 0;
    background: linear-gradient(#fafafa, #f0f0f0 25px);
    font-size: 13px;
    line-height: 34px;
    color: #017268;
    ${shadow}
`;

const FooterLink = styled.a`
    padding: 0 10px;
    border-right: 1px dotted #017268;
    color: #017268;
`;

const Version = styled.span`
    margin-left: auto;
    padding-right: 12px;
`;

const Bar = styled.footer`
    display: flex;
    height: 40px;
    border-top: 1px solid #24415f;
    background: linear-gradient(90deg, #1c5f95 0, #2577b0 5%, #3597cf 12%, #56a8d8 22%, #62b5e0 26%, #3d97d1 38%, #2f86c6 46%, #3d93d0 55%, #2a74ba 65%, #1e67ae 76%, #2263a5 84%, #1d4f8c 92%, #123765 100%);
    box-shadow: inset 0 1px #8fc3e6;
`;

const StartOrb = styled.button`
    display: flex;
    align-items: center;
    justify-content: center;
    width: 54px;
`;

const Launcher = styled.button`
    display: flex;
    align-items: center;
    justify-content: center;
    width: 62px;

    &:nth-child(2) {
        margin-left: 4px;
    }
`;

const TaskButton = styled.button`
    display: flex;
    align-items: center;
    justify-content: center;
    width: 58px;
    margin-right: 4px;
    padding-right: ${({ $stacked }) => $stacked ? 5 : 0}px;
    border: 1px solid #2a5d86;
    border-radius: 2px;
    background: ${({ $bright }) => $bright
        ? "linear-gradient(135deg, #e5f1f8, #a9d2ea)"
        : "linear-gradient(135deg, #a9d3ec, #67b3dd)"};
    box-shadow: inset 0 0 0 1px #c9e5f5${({ $stacked }) => $stacked ? ", inset -5px 0 #6a9fc4" : ""};
    font-size: 9px;
    color: #2b3238;
`;

const Tray = styled.div`
    display: flex;
    align-items: center;
    gap: 9px;
    margin-left: auto;
`;

const Clock = styled.div`
    display: flex;
    flex-direction: column;
    align-items: center;
    width: 86px;
    padding: 3px 0 0 2px;
    font-family: ${segoe};
    font-size: 11px;
    line-height: 17px;
    color: #fff;
`;

const ShowDesktop = styled.button`
    width: 14px;
    margin-right: 1px;
    border: 1px solid #7d9cbb;
    background: linear-gradient(#5c7fa6, #1d426f);
`;
